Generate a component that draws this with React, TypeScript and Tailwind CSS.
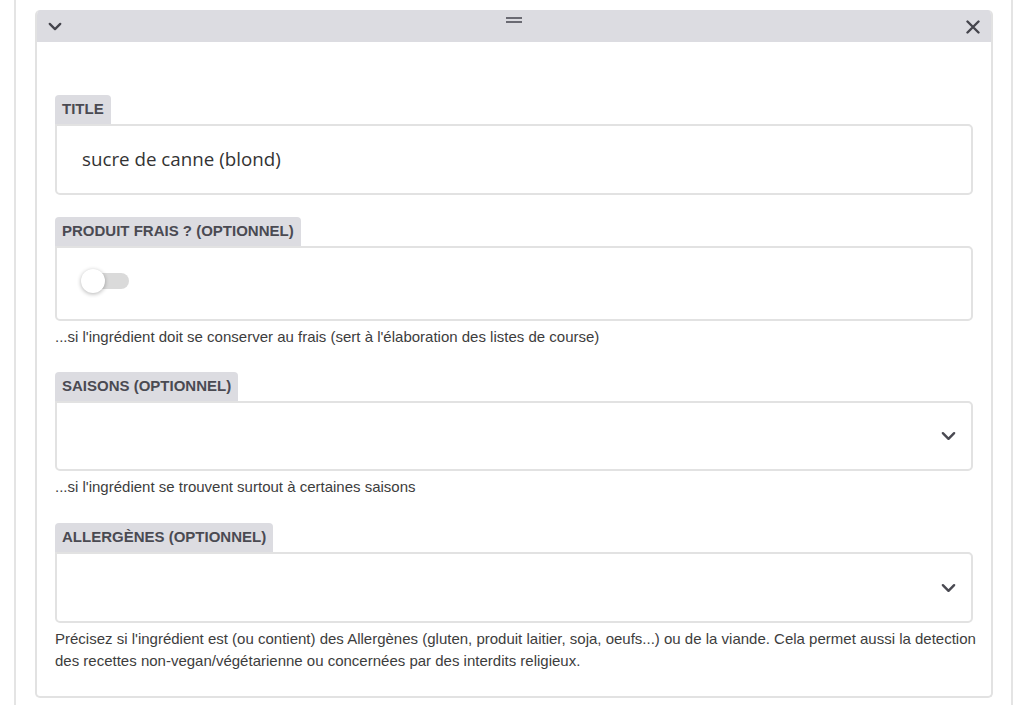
import React from 'react';

const sans = "font-['Liberation_Sans',Arial,sans-serif]";

function Chevron({ className = '' }: { className?: string }) {
  return (
    <svg viewBox="0 0 16 10" className={className} fill="none" stroke="currentColor" strokeWidth={2.6} strokeLinecap="round" strokeLinejoin="round">
      <path d="M2 2l6 6 6-6" />
    </svg>
  );
}

function Field({ label, children, help }: { label: string; children: React.ReactNode; help?: React.ReactNode }) {
  return (
    <div className="flex flex-col">
      <div className={`self-start h-[29px] px-[7px] flex items-center bg-[#dcdce1] rounded-t-[4px] text-[15px] font-bold text-[#4a4a52] ${sans}`}>
        {label}
      </div>
      {children}
      {help && <p className={`mt-[5px] -mr-[6px] text-[15px] leading-[22px] text-[#3d3d3d] ${sans}`}>{help}</p>}
    </div>
  );
}

const boxCls = 'border-2 border-[#e2e2e2] rounded-b-[5px] rounded-tr-[5px] bg-white';

export default function App() {
  return (
    <div className="w-[1021px] h-[705px] bg-white overflow-hidden">
      <div className="ml-[14px] mr-[8px] h-full border-x-2 border-[#e4e4e4] pl-[19px] pr-[18px] pt-[10px]">
        <div className="border-2 border-t-0 border-[#e2e2e2] rounded-[5px] overflow-hidden">
          <div className="h-[32px] bg-[#dcdce1] flex items-center justify-between pl-[11px] pr-[11px] relative">
            <Chevron className="w-[14px] h-[9px] text-[#45454d]" />
            <div className="absolute left-1/2 top-[7px] -translate-x-1/2 flex flex-col gap-[2px]">
              <span className="block w-[16px] h-[2px] bg-[#6a6a72]" />
              <span className="block w-[16px] h-[2px] bg-[#6a6a72]" />
            </div>
            <svg viewBox="0 0 14 14" className="w-[14px] h-[14px] mt-[1px] text-[#45454d]" fill="none" stroke="currentColor" strokeWidth={2.4} strokeLinecap="round">
              <path d="M1.5 1.5l11 11M12.5 1.5l-11 11" />
            </svg>
          </div>
          <div className="px-[18px] pt-[53px] pb-[24px] flex flex-col">
            <Field label="TITLE">
              <div className={`${boxCls} h-[71px] flex items-center px-[25px]`}>
                <span className="text-[18.75px] text-[#333] font-['Open_Sans',sans-serif]">sucre de canne (blond)</span>
              </div>
            </Field>
            <div className="mt-[22px]">
              <Field label="PRODUIT FRAIS ? (OPTIONNEL)" help="...si l'ingrédient doit se conserver au frais (sert à l'élaboration des listes de course)">
                <div className={`${boxCls} h-[75px] flex items-center pl-[24px] pb-[6px]`}>
                  <div className="relative w-[48px] h-[24px] flex items-center">
                    <div className="ml-[4px] w-[44px] h-[16px] rounded-full bg-[#dadada]" />
                    <div className="absolute left-0 top-0 w-[24px] h-[24px] rounded-full bg-white shadow-[0_1px_4px_rgba(0,0,0,0.3)]" />
                  </div>
                </div>
              </Field>
            </div>
            <div className="mt-[24px]">
              <Field label="SAISONS (OPTIONNEL)" help="...si l'ingrédient se trouvent surtout à certaines saisons">
                <div className={`${boxCls} h-[70px] flex items-center justify-end pr-[15px]`}>
                  <Chevron className="w-[15px] h-[10px] text-[#4a4a52]" />
                </div>
              </Field>
            </div>
            <div className="mt-[25px]">
              <Field
                label="ALLERGÈNES (OPTIONNEL)"
                help="Précisez si l'ingrédient est (ou contient) des Allergènes (gluten, produit laitier, soja, oeufs...) ou de la viande. Cela permet aussi la detection des recettes non-vegan/végétarienne ou concernées par des interdits religieux."
              >
                <div className={`${boxCls} h-[71px] flex items-center justify-end pr-[15px]`}>
                  <Chevron className="w-[15px] h-[10px] text-[#4a4a52]" />
                </div>
              </Field>
            </div>
          </div>
        </div>
      </div>
    </div>
  );
}
